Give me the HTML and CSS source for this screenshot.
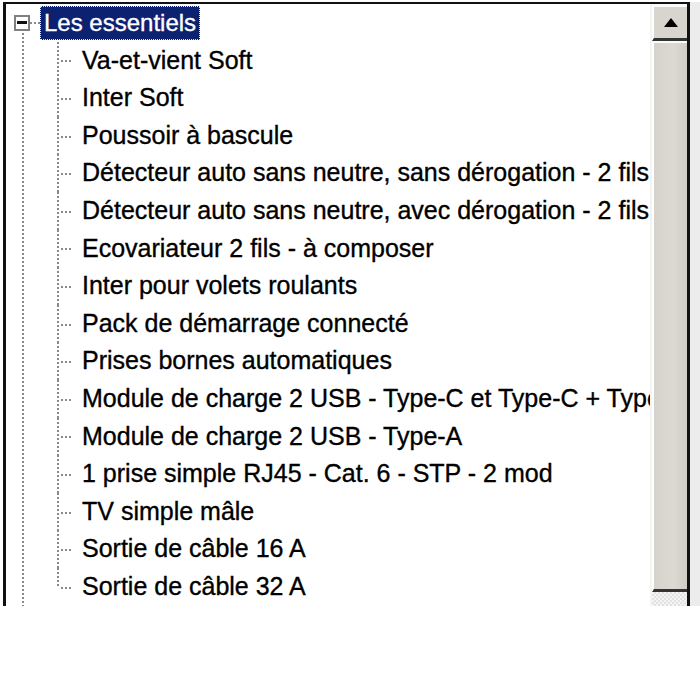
FILE: index.html
```html
<!DOCTYPE html>
<html lang="fr">
<head>
<meta charset="utf-8">
<title>Les essentiels</title>
<link rel="stylesheet" href="styles.css">
</head>
<body>
<div class="frame">
  <div class="tree">
    <div class="root-row">
      <span class="expander"><span class="minus"></span></span>
      <span class="conn"></span>
      <span class="label sel">Les essentiels</span>
    </div>
    <ul class="children">
      <li>Va-et-vient Soft</li>
      <li>Inter Soft</li>
      <li>Poussoir à bascule</li>
      <li>Détecteur auto sans neutre, sans dérogation - 2 fils</li>
      <li>Détecteur auto sans neutre, avec dérogation - 2 fils</li>
      <li>Ecovariateur 2 fils - à composer</li>
      <li>Inter pour volets roulants</li>
      <li>Pack de démarrage connecté</li>
      <li>Prises bornes automatiques</li>
      <li>Module de charge 2 USB - Type-C et Type-C + Type-A</li>
      <li>Module de charge 2 USB - Type-A</li>
      <li>1 prise simple RJ45 - Cat. 6 - STP - 2 mod</li>
      <li>TV simple mâle</li>
      <li>Sortie de câble 16 A</li>
      <li class="last">Sortie de câble 32 A</li>
    </ul>
  </div>
  <div class="scrollbar">
    <div class="btn-up">
      <svg width="14" height="9" viewBox="0 0 14 9"><polygon points="7,0 14,9 0,9" fill="#000"/></svg>
    </div>
    <div class="thumb"></div>
    <div class="track"></div>
  </div>
</div>
</body>
</html>
```

FILE: styles.css
```css
html, body {
  margin: 0;
  padding: 0;
  background: #fff;
}

.frame {
  margin: 2px 0 0 3px;
  width: 681px;
  height: 602px;
  border-top: 2px solid #111;
  border-left: 3px solid #111;
  border-right: 3px solid #111;
  display: flex;
  background: #fff;
  box-shadow: 10px 0 0 #ececec;
  overflow: hidden;
}

.tree {
  flex: 1;
  position: relative;
  overflow: hidden;
  font-family: "Liberation Sans", Arial, sans-serif;
  font-size: 25px;
  color: #000;
  white-space: nowrap;
  -webkit-text-stroke: 0.35px currentColor;
}

.tree::before {
  content: "";
  position: absolute;
  left: 16px;
  top: 29px;
  bottom: 0;
  width: 2px;
  background: repeating-linear-gradient(to bottom, #8a8a8a 0 2px, transparent 2px 4px);
}

.root-row {
  height: 37.6px;
  display: flex;
  align-items: center;
}

.expander {
  margin-left: 8px;
  width: 12px;
  height: 12px;
  border: 2px solid #808080;
  background: #fff;
  display: flex;
  align-items: center;
  justify-content: center;
  flex: none;
}

.minus {
  width: 10px;
  height: 3px;
  background: #111;
}

.conn {
  width: 10px;
  height: 2px;
  background: repeating-linear-gradient(to right, #8a8a8a 0 2px, transparent 2px 4px);
  flex: none;
}

.label.sel {
  height: 34px;
  line-height: 32px;
  padding: 0 3px 0 3px;
  box-sizing: border-box;
  background: #0c2170;
  color: #fff;
  border: 1px dotted #e8e8c8;
  font-size: 24px;
}

.children {
  list-style: none;
  margin: 0;
  padding: 0;
}

.children li {
  position: relative;
  height: 37.6px;
  line-height: 37.6px;
  padding-left: 76px;
}

.children li::before {
  content: "";
  position: absolute;
  left: 51px;
  top: 0;
  bottom: 0;
  width: 2px;
  background: repeating-linear-gradient(to bottom, #8a8a8a 0 2px, transparent 2px 4px);
}

.children li.last::before {
  bottom: 50%;
}

.children li::after {
  content: "";
  position: absolute;
  left: 53px;
  top: 50%;
  width: 14px;
  height: 2px;
  background: repeating-linear-gradient(to right, transparent 0 2px, #8a8a8a 2px 4px);
}

.scrollbar {
  width: 35px;
  flex: none;
  display: flex;
  flex-direction: column;
  padding-top: 3px;
  border-left: 2px solid #f4f4f4;
  background: #fafafa;
}

.btn-up {
  height: 31px;
  background: #d8d5cf;
  border-bottom: 3px solid #333;
  border-left: 2px solid #fff;
  display: flex;
  align-items: center;
  justify-content: center;
}

.thumb {
  margin-top: 2px;
  height: 546px;
  background: linear-gradient(to right, #d6d3cd, #dcd8d2 60%, #cfcbc5);
  border-left: 2px solid #fff;
  border-bottom: 3px solid #333;
}

.track {
  flex: 1;
  background: repeating-conic-gradient(#e2e2e2 0 25%, #f4f4f4 0 50%) 0 0 / 4px 4px;
}
```
